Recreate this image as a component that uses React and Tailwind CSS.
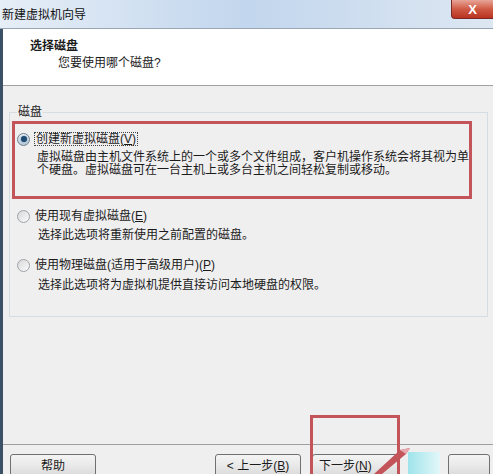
import React from "react";

function Radio({ checked }) {
  if (checked) {
    return (
      <span className="w-[13px] h-[13px] shrink-0 rounded-full border border-[#6f7f8f] bg-linear-to-b from-[#eef3f8] to-[#b9c8d6] flex items-center justify-center">
        <span className="w-[6px] h-[6px] rounded-full bg-[#1f4a72] shadow-[0_0_2px_#5d88b0]" />
      </span>
    );
  }
  return (
    <span className="w-[13px] h-[13px] shrink-0 rounded-full border border-[#9ea3a8] bg-linear-to-br from-[#d8d8d8] to-[#fbfbfb]" />
  );
}

function Key({ k }) {
  return (
    <>
      (<span className="underline underline-offset-1">{k}</span>)
    </>
  );
}

function WinButton({ children, className = "" }) {
  return (
    <button
      className={`h-[23px] w-[86px] shrink-0 rounded-[3px] border border-[#707070] bg-linear-to-b from-[#f4f4f4] via-[#e9e9e9] to-[#d9d9d9] text-[12px] leading-[14px] text-[#1b1b1b] ${className}`}
    >
      {children}
    </button>
  );
}

export default function App() {
  return (
    <div className="w-[493px] h-[474px] overflow-hidden relative bg-[#f0eff0] text-[12px] leading-[14px] text-[#1b1b1b] font-['Liberation_Sans','Noto_Sans_CJK_SC',sans-serif]">
      {/* title bar */}
      <div className="h-[29px] flex items-start justify-between bg-linear-to-r from-[#e6eef7] via-[#c2d6ed] to-[#dde7f2] border-b border-[#98a6b4]">
        <span className="pl-[2px] pt-[8px] text-[12px] leading-[14px] text-[#111]">
          新建虚拟机向导
        </span>
        <div className="w-[42px] h-[19px] shrink-0 rounded-bl-[4px] border border-t-0 border-r-0 border-[#7a2a22] bg-linear-to-b from-[#e6a497] via-[#cf5a44] to-[#b8321f] flex items-center justify-center text-white font-bold text-[13px] leading-[13px]">
          X
        </div>
      </div>

      <div className="flex h-[445px]">
        {/* window frame */}
        <div className="w-[3px] shrink-0 bg-[#3c5068]" />

        <div className="flex-1 flex flex-col">
          {/* header */}
          <div className="h-[57px] shrink-0 bg-white border-b border-[#a0a0a0] pt-[10px] pl-[27px]">
            <div className="font-bold">选择磁盘</div>
            <div className="pl-[28px] mt-[3px]">您要使用哪个磁盘?</div>
          </div>

          {/* content */}
          <div className="flex-1 pt-[19px] pl-[6px] pr-[5px]">
            <fieldset className="h-[212px] border border-[#d5dde3] px-[2px]">
              <legend className="ml-[5px] px-[1px] leading-[14px]">磁盘</legend>

              <div className="mt-[2px] w-[460px] h-[78px] border-[3px] border-[#c3555a] pt-[8px] pl-[2px]">
                <div className="flex items-center gap-[4px]">
                  <Radio checked />
                  <span className="border border-dotted border-[#444] px-[1px] leading-[12px]">
                    创建新虚拟磁盘<Key k="V" />
                  </span>
                </div>
                <div className="pl-[20px] mt-[5px] leading-[13px] whitespace-nowrap">
                  <div>虚拟磁盘由主机文件系统上的一个或多个文件组成，客户机操作系统会将其视为单</div>
                  <div>个硬盘。虚拟磁盘可在一台主机上或多台主机之间轻松复制或移动。</div>
                </div>
              </div>

              <div className="pl-[5px] mt-[10px]">
                <div className="flex items-center gap-[5px]">
                  <Radio />
                  <span>
                    使用现有虚拟磁盘<Key k="E" />
                  </span>
                </div>
                <div className="pl-[21px] mt-[6px] leading-[13px]">
                  选择此选项将重新使用之前配置的磁盘。
                </div>
              </div>

              <div className="pl-[5px] mt-[16px]">
                <div className="flex items-center gap-[5px]">
                  <Radio />
                  <span>
                    使用物理磁盘(适用于高级用户)<Key k="P" />
                  </span>
                </div>
                <div className="pl-[21px] mt-[7px] leading-[13px]">
                  选择此选项将为虚拟机提供直接访问本地硬盘的权限。
                </div>
              </div>
            </fieldset>
          </div>

          {/* footer */}
          <div className="h-[30px] shrink-0 border-t border-[#a0a0a0] pt-[9px] pl-[7px] flex items-start">
            <WinButton>帮助</WinButton>
            <WinButton className="ml-[119px]">
              &lt; 上一步<Key k="B" />
            </WinButton>
            <WinButton className="ml-[11px] text-left pl-[6px] border-[#3c7fb1] from-[#e5f4fc] via-[#c4e5f6] to-[#98d1ef]">
              下一步<Key k="N" />
            </WinButton>
            <WinButton className="ml-[50px] !w-[42px]" />
          </div>
        </div>
      </div>

      {/* annotation overlays */}
      <div className="absolute left-[310px] top-[415px] w-[90px] h-[80px] border-[3px] border-[#c3555a]" />
      <svg className="absolute left-[370px] top-[444px]" width="80" height="30" viewBox="0 0 80 30">
        <defs>
          <linearGradient id="cy" x1="0" x2="1" y1="0" y2="0">
            <stop offset="0" stopColor="#9ee4ea" />
            <stop offset="1" stopColor="#e3f7f9" />
          </linearGradient>
        </defs>
        <rect x="38" y="8" width="32" height="22" fill="url(#cy)" />
        <polygon points="4,30 12,30 36,10 40,4 30,6" fill="#c3555a" />
        <polygon points="30,6 40,4 36,10" fill="#e7a9b0" />
      </svg>
    </div>
  );
}
